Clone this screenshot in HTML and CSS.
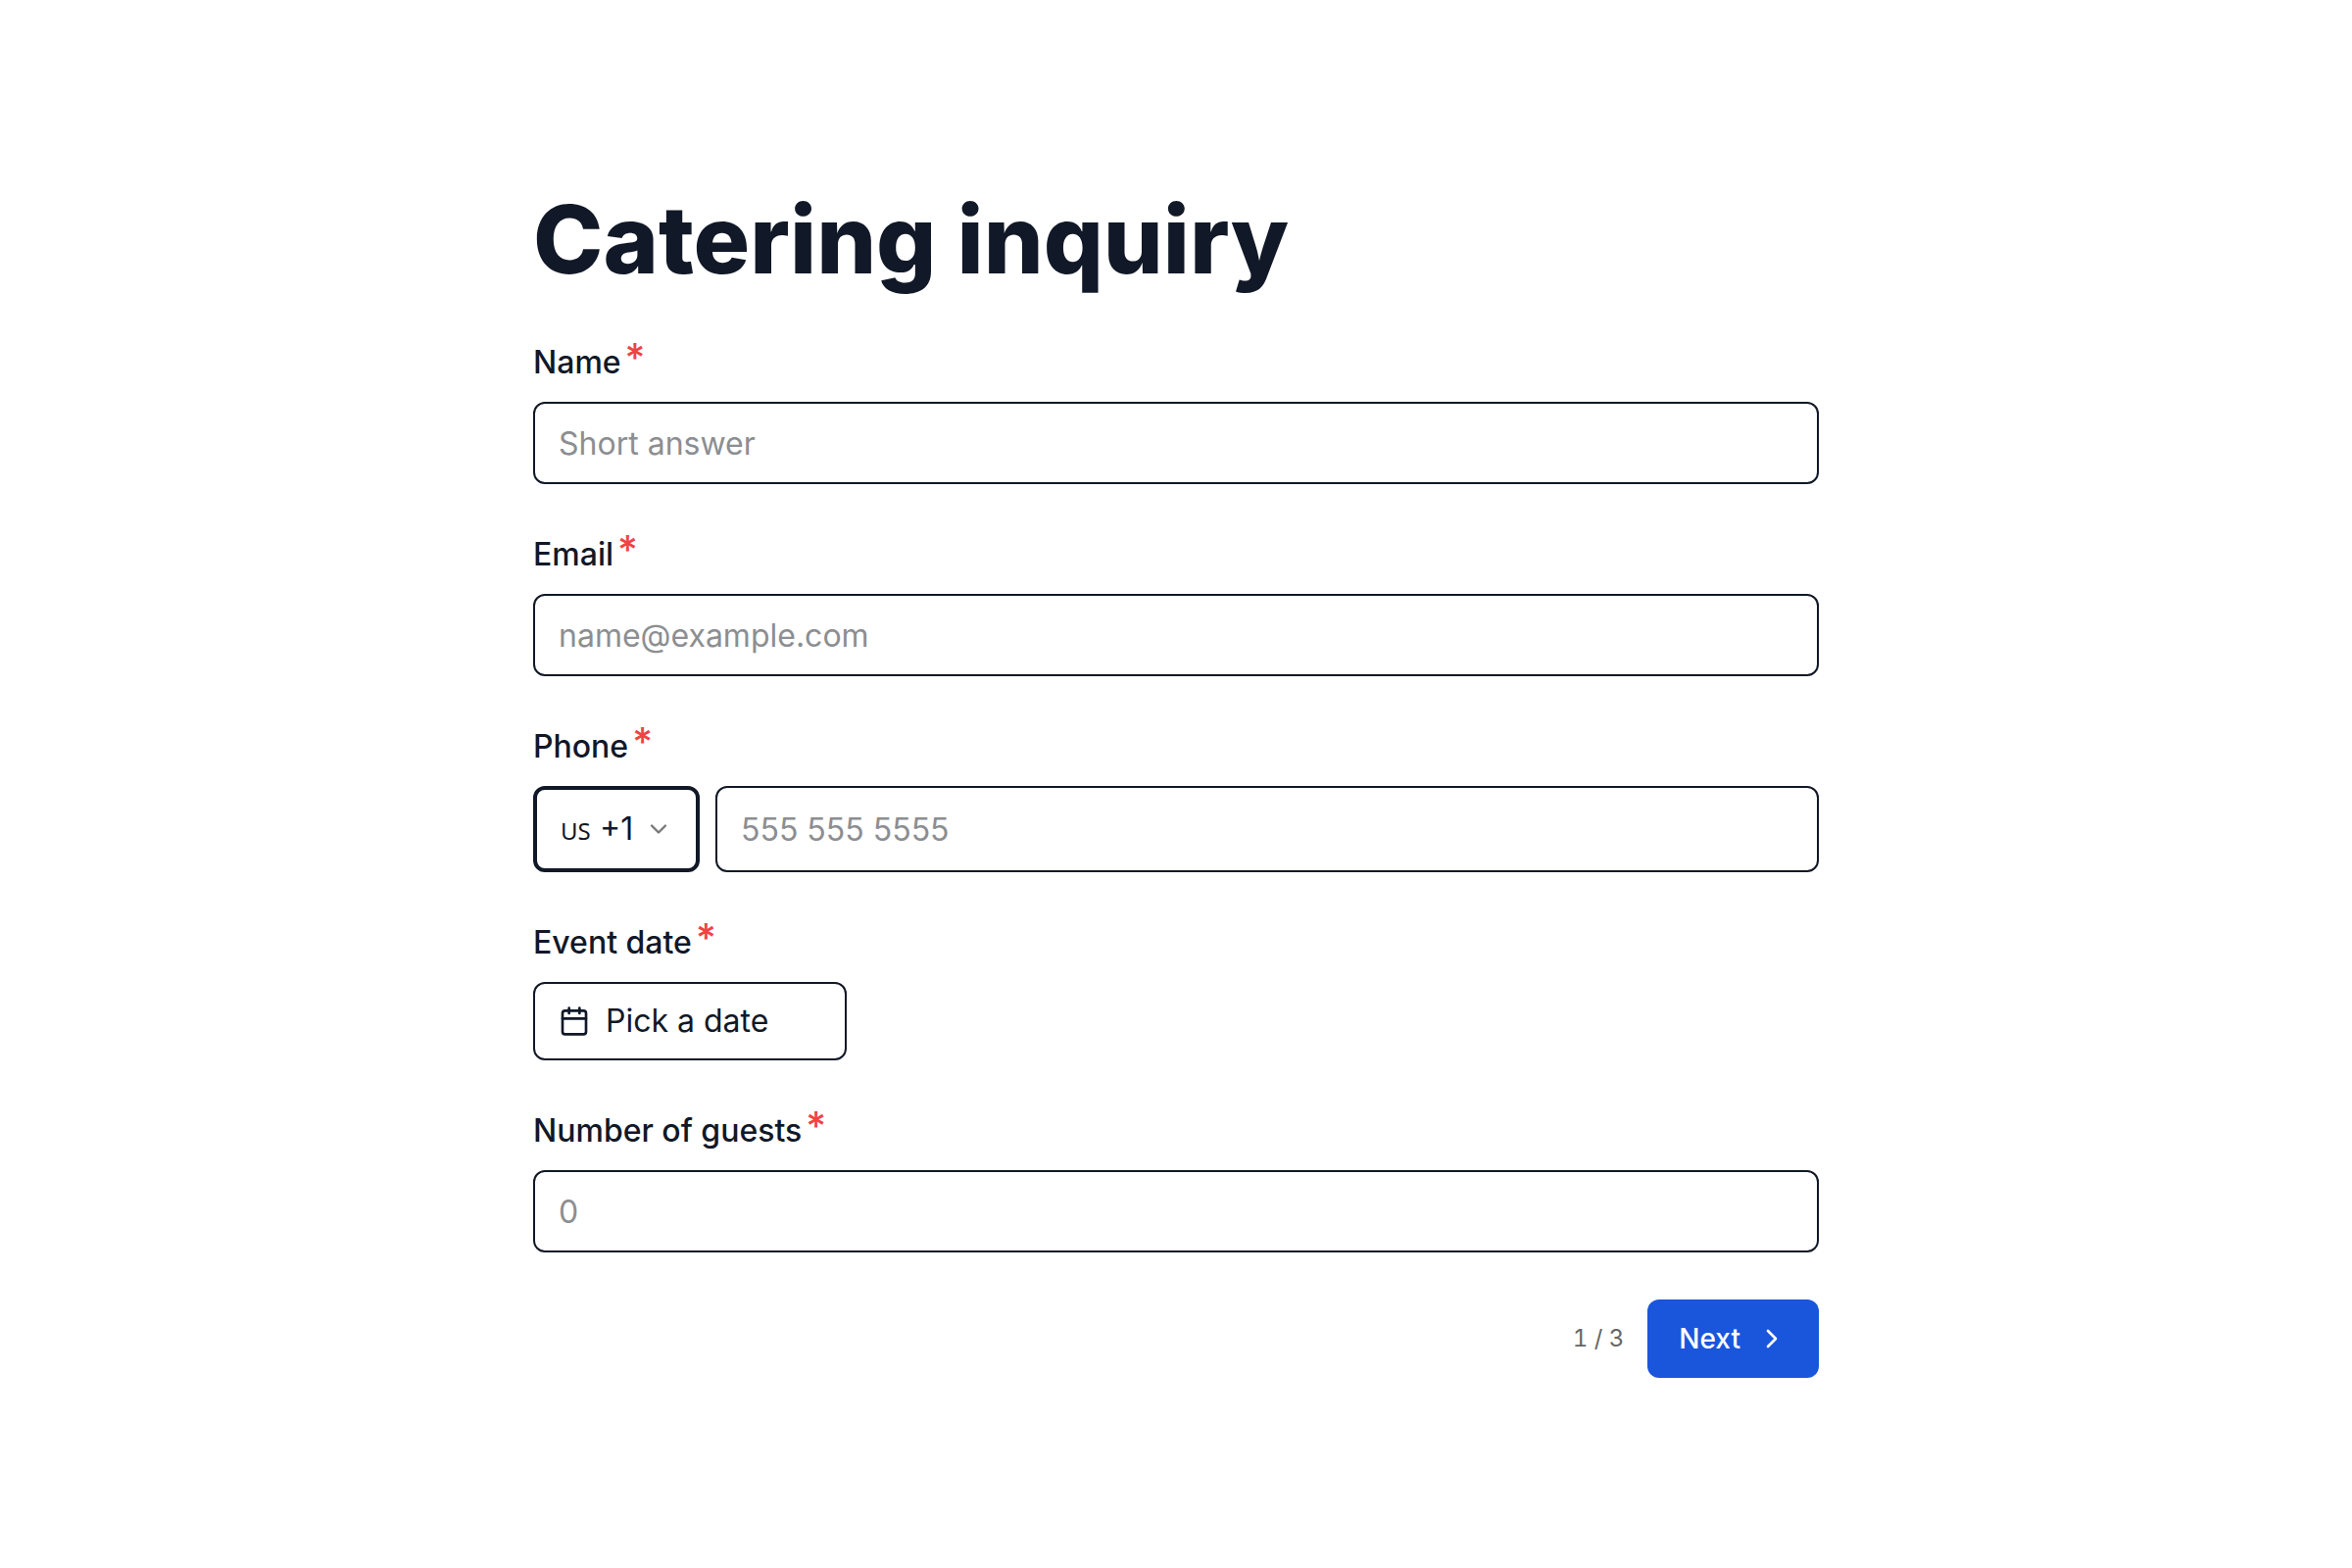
FILE: index.html
```html
<!DOCTYPE html>
<html lang="en">
<head>
<meta charset="utf-8">
<meta name="viewport" content="width=device-width, initial-scale=1">
<title>Catering inquiry</title>
<link rel="stylesheet" href="styles.css">
</head>
<body>
<main class="page">
  <h1 class="title">Catering inquiry</h1>
  <form class="form">
    <div class="field">
      <label class="label" for="name">Name<span class="required">*</span></label>
      <input class="input" id="name" type="text" placeholder="Short answer" required>
    </div>
    <div class="field">
      <label class="label" for="email">Email<span class="required">*</span></label>
      <input class="input" id="email" type="email" placeholder="name@example.com" required>
    </div>
    <div class="field">
      <label class="label" for="phone">Phone<span class="required">*</span></label>
      <div class="phone">
        <div class="country">
          <select class="country-select" aria-label="Country code">
            <option>+1</option>
          </select>
          <span class="country-code">US</span>
          <svg class="country-chevron" viewBox="0 0 24 24" aria-hidden="true"><path d="m6 9 6 6 6-6"/></svg>
        </div>
        <input class="input phone-input" id="phone" type="tel" placeholder="555 555 5555" required>
      </div>
    </div>
    <div class="field">
      <label class="label" for="date">Event date<span class="required">*</span></label>
      <button class="date-button" id="date" type="button">
        <svg class="icon" viewBox="0 0 24 24" aria-hidden="true"><path d="M8 2v4M16 2v4M3 10h18"/><rect x="3" y="4" width="18" height="18" rx="2"/></svg>
        Pick a date
      </button>
    </div>
    <div class="field">
      <label class="label" for="guests">Number of guests<span class="required">*</span></label>
      <input class="input" id="guests" type="text" inputmode="numeric" placeholder="0" required>
    </div>
    <div class="actions">
      <span class="progress">1 / 3</span>
      <button class="next" type="submit">Next
        <svg class="icon" viewBox="0 0 24 24" aria-hidden="true"><path d="m9 18 6-6-6-6"/></svg>
      </button>
    </div>
  </form>
</main>
</body>
</html>
```
FILE: styles.css
```css
*, *::before, *::after { box-sizing: border-box; }
body {
  margin: 0;
  background: #fff;
  color: #111827;
  font-family: Inter, "Liberation Sans", sans-serif;
  font-size: 32px;
  line-height: 48px;
}
input, select, button { font: inherit; color: inherit; margin: 0; }
.page {
  max-width: 1376px;
  margin: 0 auto;
  padding: 184px 32px;
}
.title {
  margin: 0 0 42px;
  font-size: 96px;
  line-height: 120px;
  font-weight: 800;
}
.form { display: flex; flex-direction: column; gap: 48px; }
.field { display: flex; flex-direction: column; align-items: flex-start; gap: 16px; }
.label { display: flex; align-items: flex-start; gap: 4px; font-weight: 500; }
.required { color: #ef4444; font-size: 40px; line-height: 38px; }
.input, .date-button, .country-select {
  border: 2px solid #111827;
  border-radius: 12px;
  background: #fff;
}
.input { width: 100%; height: 84px; padding: 0 24px; }
.input::placeholder { color: #8c8e91; opacity: 1; }
.phone { display: flex; gap: 16px; width: 100%; }
.phone-input { flex: 1; height: 88px; min-width: 0; }
.country { display: grid; align-items: baseline; }
.country > * { grid-area: 1 / 1; }
.country-select {
  width: 170px;
  height: 88px;
  padding: 0 48px 0 64px;
  border-width: 4px;
  appearance: none;
}
.country-code {
  padding-left: 28px;
  font-family: "Noto Sans", sans-serif;
  font-size: 24px;
  pointer-events: none;
}
.country-chevron {
  align-self: center;
  justify-self: end;
  width: 28px;
  height: 28px;
  margin-right: 28px;
  fill: none;
  stroke: #777;
  stroke-width: 2;
  stroke-linecap: round;
  stroke-linejoin: round;
  pointer-events: none;
}
.icon {
  width: 32px;
  height: 32px;
  fill: none;
  stroke: currentColor;
  stroke-width: 2;
  stroke-linecap: round;
  stroke-linejoin: round;
}
.date-button {
  display: flex;
  align-items: center;
  gap: 16px;
  width: 320px;
  height: 80px;
  padding: 0 24px;
}
.actions { display: flex; justify-content: flex-end; align-items: center; gap: 24px; }
.progress { color: #666; font-size: 24px; font-variant-numeric: tabular-nums; }
.next {
  display: flex;
  align-items: center;
  gap: 16px;
  height: 80px;
  padding: 0 32px;
  border: 0;
  border-radius: 12px;
  background: #1a56db;
  color: #fff;
  font-size: 28px;
  font-weight: 500;
}
```
